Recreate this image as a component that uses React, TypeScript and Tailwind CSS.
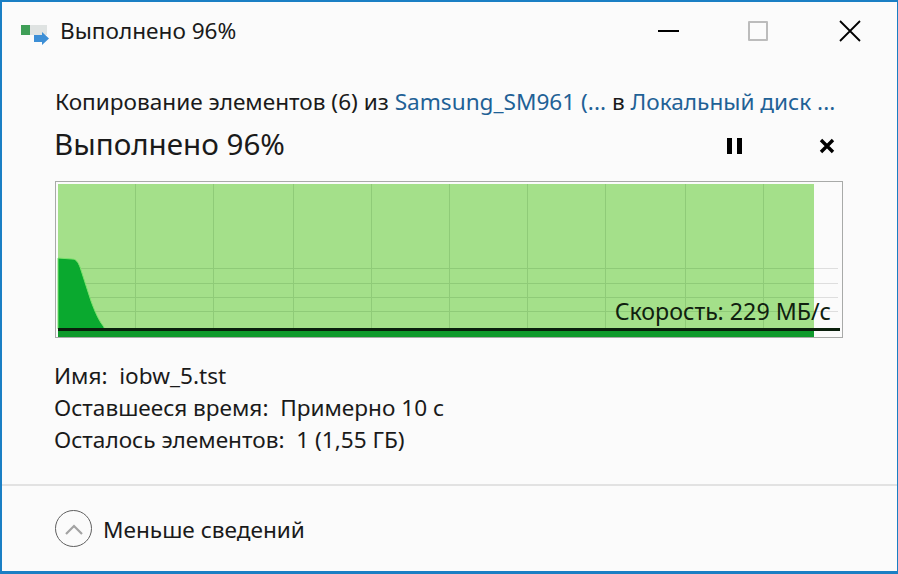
const gridX = [135, 213, 293, 371, 449, 527, 605, 685, 763]
const gridY = [268, 283, 297, 311]

function SpeedChart() {
  return (
    <svg width="788" height="157" viewBox="55 181 788 157" className="block">
      <rect x="55.5" y="181.5" width="787" height="156" fill="#fbfbfb" stroke="#a8aaa8" />
      <rect x="58" y="184" width="756" height="153" fill="#a4e08a" />
      {gridY.map(y => (
        <g key={y}>
          <line x1="58" x2="814" y1={y + 0.5} y2={y + 0.5} stroke="#8fcb78" />
          <line x1="814" x2="838" y1={y + 0.5} y2={y + 0.5} stroke="#dedede" />
        </g>
      ))}
      {gridX.map(x => (
        <line key={x} x1={x + 0.5} x2={x + 0.5} y1="184" y2="329" stroke="#8fcb78" />
      ))}
      <path
        d="M58 258 L72 259 C76 259 78 262 80 267 C84 278 87 290 91 301 C95 312 99 321 104 327 L104 329 L58 329 Z"
        fill="#0aa92f"
        stroke="#7be36c"
        strokeWidth="1"
      />
      <rect x="58" y="331" width="756" height="6" fill="#0f9a2c" />
      <rect x="58" y="328" width="782" height="3" fill="#0a1f0c" />
    </svg>
  )
}

function CopyIcon() {
  return (
    <svg width="30" height="28" viewBox="0 0 30 28" className="block">
      <rect x="1" y="8" width="9" height="10" fill="#3f9f57" />
      <rect x="10" y="8" width="17" height="10" fill="#dfe3e2" />
      <path d="M14 18 H22 V15 L29 21.5 L22 28 V25 H14 Z" fill="#3d8fd6" />
    </svg>
  )
}

export default function App() {
  return (
    <div className="w-[898px] h-[574px] overflow-hidden bg-[#fbfbfb] border-t-2 border-l-2 border-b-[3px] border-r border-[#1a7fc4] font-['Noto_Sans','Open_Sans',sans-serif] text-[#1a1a1a] flex flex-col">
      <div className="h-[58px] flex items-center shrink-0">
        <div className="ml-[18px] w-[30px]"><CopyIcon /></div>
        <span className="ml-[10px] text-[22.6px] leading-none">Выполнено 96%</span>
        <div className="ml-auto flex items-center mr-[35px]">
          <div className="w-[24px] flex justify-center">
            <div className="w-[21px] h-[2px] bg-black" />
          </div>
          <div className="ml-[68px] w-[20px] h-[20px] border-2 border-[#bcbcbc] rounded-[1px]" />
          <svg className="ml-[70px]" width="24" height="24" viewBox="0 0 24 24">
            <path d="M2 2 L22 22 M22 2 L2 22" stroke="black" strokeWidth="1.8" fill="none" />
          </svg>
        </div>
      </div>

      <div className="pl-[52px] pr-[54px] pt-[29px] flex-1 flex flex-col">
        <div className="ml-[1px] text-[22.6px] leading-[26px] whitespace-nowrap">
          Копирование элементов (6) из <span className="text-[#1f6196]">Samsung_SM961 (...</span> в <span className="text-[#1f6196]">Локальный диск ...</span>
        </div>
        <div className="flex items-center mt-[12px] h-[34px]">
          <span className="text-[29.6px] leading-none">Выполнено 96%</span>
          <div className="ml-auto flex items-center gap-[77px] mr-[8px] mt-[3px]">
            <div className="flex gap-[5px]">
              <div className="w-[5px] h-[16px] bg-black" />
              <div className="w-[5px] h-[16px] bg-black" />
            </div>
            <svg width="16" height="16" viewBox="0 0 16 16">
              <path d="M2 2 L14 14 M14 2 L2 14" stroke="black" strokeWidth="3.4" fill="none" />
            </svg>
          </div>
        </div>
        <div className="relative mt-[20px] ml-[1px] w-[788px]">
          <SpeedChart />
          <span className="absolute right-[12px] top-[115px] text-[23.2px] leading-[30px] text-[#10200f] whitespace-nowrap">Скорость: 229 МБ/с</span>
        </div>
        <div className="mt-[22px] text-[22.6px] leading-[32px] whitespace-nowrap">
          <div>Имя:&nbsp; iobw_5.tst</div>
          <div>Оставшееся время:&nbsp; Примерно 10 с</div>
          <div>Осталось элементов:&nbsp; 1 (1,55 ГБ)</div>
        </div>
      </div>

      <div className="h-[87px] shrink-0 border-t-2 border-[#e2e2e2] flex items-center pl-[53px]">
        <div className="w-[37px] h-[37px] rounded-full border border-[#5f5f5f] flex items-center justify-center">
          <svg width="22" height="14" viewBox="0 0 22 14">
            <path d="M3 12 L11 4 L19 12" fill="none" stroke="#a3a3a3" strokeWidth="2.2" />
          </svg>
        </div>
        <span className="ml-[11px] mt-[3px] text-[22.6px] leading-none">Меньше сведений</span>
      </div>
    </div>
  )
}
